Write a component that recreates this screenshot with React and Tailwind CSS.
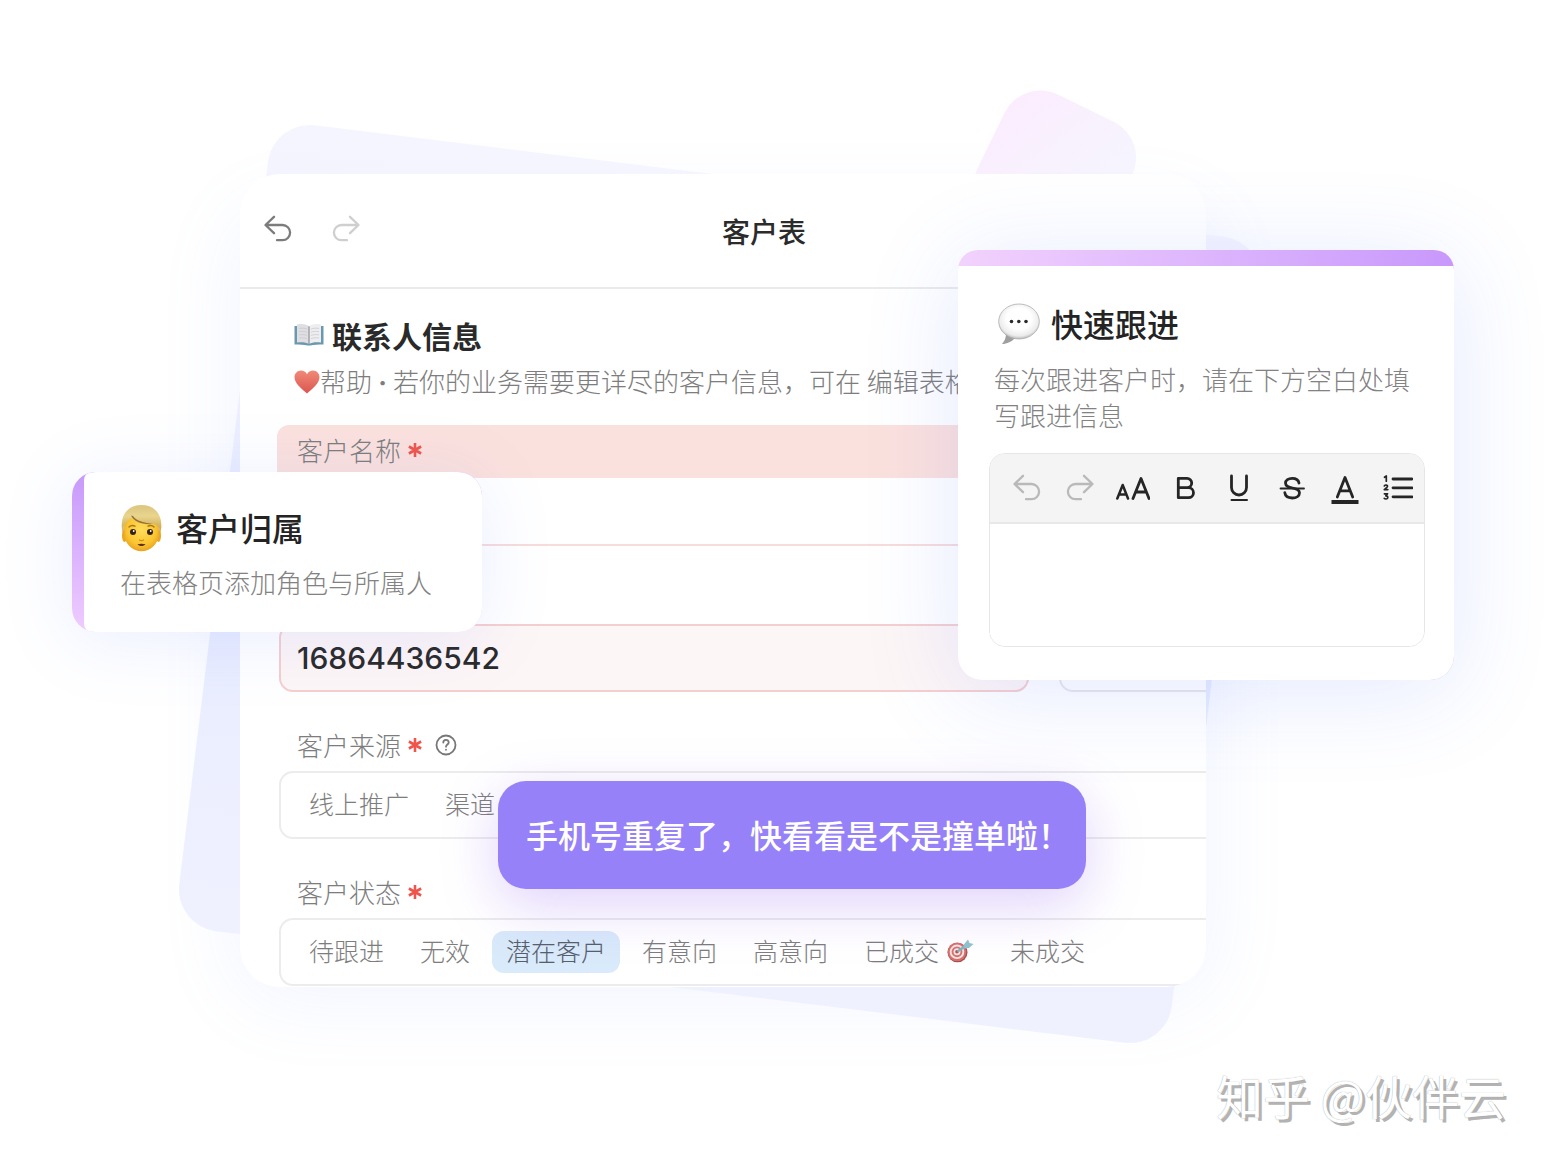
import React from "react";

function UndoIcon({ className = "" }) {
  return (
    <svg viewBox="0 0 28 28" className={"size-7 " + className} fill="none" stroke="currentColor" strokeWidth="2.300" strokeLinecap="round" strokeLinejoin="round" aria-hidden="true">
      <path d="M10 1.800 1.500 10 10 18.200M1.800 10H18.500a7.600 7.600 0 0 1 0 15.200H13" />
    </svg>
  );
}

function BookIcon() {
  return (
    <svg viewBox="0 0 30 24" className="h-6 w-[30px]" aria-hidden="true">
      <path d="M.5 3h29V21.500c-5 .2-10 0-13 1h-3c-3-1-8-.8-13-1Z" fill="#6899ae" />
      <path d="M3 1.500C7.500.6 12.500 1 15 3.500v17.500C12 19 7 18.800 3 19.500Z" fill="#dfdfe3" />
      <path d="M27 1.500C22.500.6 17.500 1 15 3.500v17.500c3-2 8-2.200 12-1.500Z" fill="#eeeeF0" />
      <path d="M15 3.500v17.500" stroke="#8f8f94" strokeWidth="1.200" />
      <path d="M5 5.500c3-.6 5.500-.4 8 .6M5 8.700c3-.6 5.500-.4 8 .6M5 11.900c3-.6 5.500-.4 8 .6M5 15.100c3-.6 5.500-.4 8 .6M25 5.500c-3-.6-5.500-.4-8 .6M25 8.700c-3-.6-5.500-.4-8 .6M25 11.900c-3-.6-5.500-.4-8 .6M25 15.100c-3-.6-5.500-.4-8 .6" fill="none" stroke="#c6c6cb" strokeWidth=".7" />
    </svg>
  );
}

function HeartIcon() {
  return (
    <svg viewBox="0 0 26 26" className="size-[26px]" aria-hidden="true">
      <defs>
        <linearGradient id="heart" x1="0" y1="0" x2="0" y2="1">
          <stop offset="0" stopColor="#f08a78" />
          <stop offset="1" stopColor="#dc5550" />
        </linearGradient>
      </defs>
      <path d="M13 24.500C8 20 .5 14.500.5 8.300.5 4.500 3.500 1.600 7 1.600c2.600 0 4.800 1.300 6 3.600 1.200-2.300 3.400-3.600 6-3.600 3.500 0 6.500 2.900 6.500 6.700C25.500 14.500 18 20 13 24.500Z" fill="url(#heart)" />
    </svg>
  );
}

function FaceIcon() {
  return (
    <svg viewBox="0 0 42 48" className="h-12 w-[42px]" aria-hidden="true">
      <defs>
        <radialGradient id="skin" cx=".5" cy=".4" r=".65">
          <stop offset="0" stopColor="#ffdc5a" />
          <stop offset=".65" stopColor="#fbc531" />
          <stop offset="1" stopColor="#e39a1c" />
        </radialGradient>
        <linearGradient id="hair" x1="0" y1="0" x2="0" y2="1">
          <stop offset="0" stopColor="#dcc680" />
          <stop offset=".4" stopColor="#ead58f" />
          <stop offset="1" stopColor="#c9a64c" />
        </linearGradient>
      </defs>
      <path d="M2 26C0 11 8 1 21.500 1S43 11 41 26l-1.500 10h-36Z" fill="url(#hair)" />
      <ellipse cx="4.500" cy="32" rx="2.500" ry="6" fill="#e9a627" />
      <ellipse cx="38.500" cy="32" rx="2.500" ry="6" fill="#e9a627" />
      <path d="M4.500 22C5 13 12 11 21.500 11S38 13 38.500 22v9c0 9-8.500 16.300-17 16.300S4.500 40 4.500 31Z" fill="url(#skin)" />
      <path d="M2.500 25c1.500-5 4-7 8.500-11 5 5 13 7 22 6 3 1 5.500 2 7.800 6 1.500-9-1.300-17-8.800-20.500C22 0 9 3 4.500 10.500 2 15 1.800 20 2.500 25Z" fill="url(#hair)" />
      <path d="M11 11.500c3 6.500 12 9.300 22 8.500-8-1-17-3-20-8Z" fill="#94702a" />
      <path d="M9 23c1.500-1.600 4-1.800 6-.8M28 22.200c2-1 4.500-.8 6 .8" fill="none" stroke="#a8761e" strokeWidth="1.400" strokeLinecap="round" />
      <circle cx="13" cy="28" r="3" fill="#33211a" />
      <circle cx="30" cy="28" r="3" fill="#33211a" />
      <circle cx="13.700" cy="27" r=".9" fill="#fff" />
      <circle cx="30.700" cy="27" r=".9" fill="#fff" />
      <path d="M19.500 36q2 1.200 4 0" fill="none" stroke="#d08a1a" strokeWidth="1.300" strokeLinecap="round" />
      <path d="M17.500 40.300c2.600-.8 5.400-.8 8 0-1.500 2.400-6.500 2.400-8 0Z" fill="#5f3217" />
    </svg>
  );
}

function BubbleIcon() {
  return (
    <svg viewBox="0 0 42 42" className="size-[42px]" aria-hidden="true">
      <defs>
        <radialGradient id="bubble" cx=".5" cy=".42" r=".6">
          <stop offset=".5" stopColor="#ffffff" />
          <stop offset=".82" stopColor="#ececec" />
          <stop offset="1" stopColor="#adadad" />
        </radialGradient>
      </defs>
      <path d="M8 31c0 4-1.500 7-4 10 5 0 10-2.500 13-6Z" fill="#9f9f9f" />
      <ellipse cx="21" cy="18.500" rx="20.300" ry="17.500" fill="url(#bubble)" stroke="#adadad" strokeWidth=".8" />
      <circle cx="13.500" cy="18.500" r="1.800" fill="#2b2b2b" />
      <circle cx="20.800" cy="18.500" r="1.800" fill="#2b2b2b" />
      <circle cx="28" cy="18.500" r="1.800" fill="#2b2b2b" />
    </svg>
  );
}

function TargetIcon() {
  return (
    <svg viewBox="0 0 27 24" className="h-6 w-[27px]" aria-hidden="true">
      <ellipse cx="10.500" cy="13.500" rx="10" ry="9.800" fill="#a85050" />
      <circle cx="10" cy="12.800" r="9.300" fill="#d9706c" />
      <circle cx="10" cy="12.800" r="7.300" fill="#f6e6e4" />
      <circle cx="10" cy="12.800" r="5.400" fill="#d9706c" />
      <circle cx="10" cy="12.800" r="3.500" fill="#f6e6e4" />
      <circle cx="10" cy="12.800" r="1.800" fill="#b9524f" />
      <path d="M10.500 12.500 20 6" stroke="#7fb3bd" strokeWidth="2.400" />
      <path d="m16.500 6 4.500-5.500 1.500 3.500 4 1-4.500 4-5 .5Z" fill="#8fc4cd" />
    </svg>
  );
}

function Required() {
  return (
    <svg viewBox="0 0 14 14" className="size-3.5" stroke="#f0554c" strokeWidth="2.600" role="img" aria-label="必填">
      <path d="M7 0v14M.9 3.500l12.200 7M13.100 3.500.9 10.500" />
    </svg>
  );
}

function FieldLabel({ id, text, help }) {
  return (
    <div className="flex h-9 items-center gap-[7px]">
      <span id={id} className="text-[26px] leading-9 font-light text-[#7d7d7d]">{text}</span>
      <Required />
      {help && (
        <button type="button" aria-label="帮助说明" className="ml-1.5 text-[#777]">
          <svg viewBox="0 0 22 22" className="size-[22px]" fill="none" stroke="currentColor" strokeWidth="1.800" strokeLinecap="round" aria-hidden="true">
            <circle cx="11" cy="11" r="9.500" />
            <path d="M8.300 8.600c0-3.600 5.400-3.600 5.400-.2 0 2-2.700 2.100-2.700 4.300M11 15.600v.2" />
          </svg>
        </button>
      )}
    </div>
  );
}

function OptionRow({ labelledBy, options, selected }) {
  return (
    <div role="group" aria-labelledby={labelledBy} className="flex h-[68px] items-center gap-2 rounded-[14px] border-2 border-[#ececec] px-3.5">
      {options.map((o) => (
        <button
          key={o.text}
          type="button"
          aria-pressed={o.text === selected}
          className={
            "flex h-[42px] shrink-0 items-center gap-2 rounded-xl px-3.5 pb-0.5 text-[25px] font-light whitespace-nowrap " +
            (o.text === selected ? "bg-[#d9eafa] text-[#55606b]" : "text-[#7d7d7d]")
          }
        >
          {o.text}
          {o.icon}
        </button>
      ))}
    </div>
  );
}

function FormCard() {
  return (
    <section className="relative h-[813px] overflow-hidden rounded-[40px] bg-white">
      <div className="w-[calc(100%+82px)]">
        <header className="grid h-[115px] grid-cols-[1fr_auto_1fr] items-center border-b-2 border-[#ebebeb] pl-6">
          <div className="flex items-center gap-10 pb-1">
            <button type="button" aria-label="撤销" className="text-[#7c7c7c]"><UndoIcon /></button>
            <button type="button" aria-label="重做" className="text-[#cfcfcf]"><UndoIcon className="-scale-x-100" /></button>
          </div>
          <h1 className="pr-6 text-[28px] leading-10 font-medium text-[#2b2b2b]">客户表</h1>
        </header>

        <div className="pl-[39px]">
          <div className="pt-[26px] pl-[15px]">
            <h2 className="flex h-10 items-center gap-2 text-[30px] leading-10 font-bold text-[#2a2a2a]">
              <BookIcon />
              联系人信息
            </h2>
            <p className="flex h-[53px] items-center text-[26px] font-light whitespace-nowrap text-[#7d7d7d]">
              <HeartIcon />
              <span>
                帮助<span className="font-[Inter,sans-serif] font-bold"> · </span>若你的业务需要更详尽的客户信息，可在 编辑表格
              </span>
            </p>
          </div>

          <div className="mt-[17px] -ml-0.5 h-[53px] rounded-tl-xl bg-[#fbe1dd] pt-[7px] pl-5">
            <FieldLabel id="name-label" text="客户名称" />
          </div>
          <div className="h-[68px] border-b-2 border-[#f8dcda]" />

          <div className="mt-[78px] flex gap-[30px]">
            <input
              aria-label="手机号"
              defaultValue="16864436542"
              className="h-[68px] w-[750px] shrink-0 rounded-[14px] border-2 border-[#f5cfcf] bg-[#fdf6f6] pl-4 font-[Inter,sans-serif] text-[30px] font-medium text-[#2a2a2a] outline-none"
            />
            <div className="h-[68px] grow rounded-[14px] border-2 border-[#e6e8ee]" />
          </div>

          <div className="mt-[35px]">
            <div className="pl-[18px]">
              <FieldLabel id="source-label" text="客户来源" help />
            </div>
            <div className="mt-2">
              <OptionRow labelledBy="source-label" options={[{ text: "线上推广" }, { text: "渠道" }]} />
            </div>
          </div>

          <div className="mt-[35px]">
            <div className="pl-[18px]">
              <FieldLabel id="status-label" text="客户状态" />
            </div>
            <div className="mt-2">
              <OptionRow
                labelledBy="status-label"
                selected="潜在客户"
                options={[
                  { text: "待跟进" },
                  { text: "无效" },
                  { text: "潜在客户" },
                  { text: "有意向" },
                  { text: "高意向" },
                  { text: "已成交", icon: <TargetIcon /> },
                  { text: "未成交" },
                ]}
              />
            </div>
          </div>
        </div>
      </div>
    </section>
  );
}

function OwnerCard() {
  return (
    <section className="absolute top-[472px] left-[72px] flex h-[160px] w-[410px] overflow-hidden rounded-3xl bg-gradient-to-b from-[#c799fb] to-[#efccff] pl-3 shadow-[0_8px_72px_rgba(90,120,255,0.13)]">
      <div className="w-full rounded-l-lg bg-white pt-8 pl-9">
        <h2 className="flex h-12 items-center gap-3.5 text-[32px] leading-10 font-medium text-[#242424]">
          <FaceIcon />
          <span className="pb-0.5">客户归属</span>
        </h2>
        <p className="mt-3 text-[26px] leading-9 font-light text-[#828282]">在表格页添加角色与所属人</p>
      </div>
    </section>
  );
}

const tools = [
  { label: "撤销", icon: <UndoIcon className="text-[#b9b9b9]" /> },
  { label: "重做", icon: <UndoIcon className="-scale-x-100 text-[#b9b9b9]" /> },
  {
    label: "字号",
    icon: (
      <svg viewBox="0 0 34 28" className="h-7 w-[34px]" fill="none" stroke="currentColor" strokeWidth="2.800" strokeLinejoin="round" strokeLinecap="round" aria-hidden="true">
        <path d="M1.300 24.500 6.700 11l5.300 13.500M3.200 20.500h7" strokeWidth="2.500" />
        <path d="M17 24.500 25 4.500l8 20M19.800 18h10.400" />
      </svg>
    ),
  },
  {
    label: "加粗",
    icon: (
      <svg viewBox="0 0 28 28" className="size-7" fill="none" stroke="currentColor" strokeWidth="2.800" strokeLinejoin="round" aria-hidden="true">
        <path d="M6.300 4.300H15a4.600 4.600 0 0 1 0 9.400H6.300ZM6.300 13.700H16.500a5 5 0 0 1 0 10H6.300Z" />
      </svg>
    ),
  },
  {
    label: "下划线",
    icon: (
      <svg viewBox="0 0 28 28" className="size-7" fill="none" stroke="currentColor" strokeLinecap="round" aria-hidden="true">
        <path d="M6.500 2v11.500a7.500 7.500 0 0 0 15 0V2" strokeWidth="2.800" />
        <path d="M6.500 26h15.500" strokeWidth="2" />
      </svg>
    ),
  },
  {
    label: "删除线",
    icon: (
      <svg viewBox="0 0 28 28" className="size-7" fill="none" stroke="currentColor" strokeLinecap="round" aria-hidden="true">
        <path d="M21 9C20.500 5.800 18 4.300 14.200 4.300S7.500 6.200 7.500 9.200c0 6.300 14 3.300 14 9.500 0 3.300-3.200 5.300-7.300 5.300S7.200 22 6.800 18.700" strokeWidth="2.800" />
        <path d="M2.500 14.500h23.500" strokeWidth="1.800" />
      </svg>
    ),
  },
  {
    label: "文字颜色",
    icon: (
      <svg viewBox="0 0 28 32" className="h-8 w-7" fill="none" stroke="currentColor" strokeLinecap="round" strokeLinejoin="round" aria-hidden="true">
        <path d="M6.300 25 14 5.500l7.700 19.500M9 18.800h10" strokeWidth="2.800" />
        <path d="M.5 30h27" strokeWidth="4" strokeLinecap="butt" />
      </svg>
    ),
  },
  {
    label: "有序列表",
    icon: (
      <svg viewBox="0 0 30 28" className="h-7 w-[30px]" fill="none" stroke="currentColor" strokeLinecap="round" strokeLinejoin="round" aria-hidden="true">
        <path d="M10 5h19M10 13.800h19M10 22.800h19" strokeWidth="2.800" />
        <path d="M1.500 3.300 3.300 2v5.200M1.300 12c.4-1.500 3.400-1.200 3.200.4-.1 1-2 1.800-3.200 3.200h3.500M1.400 19.800h3.200l-1.800 2c2.600 0 2.600 3.200.2 3.200-.8 0-1.400-.2-1.800-.7" strokeWidth="1.700" />
      </svg>
    ),
  },
];

function FollowCard() {
  return (
    <section className="absolute top-[250px] right-[92px] w-[496px] overflow-hidden rounded-t-[20px] rounded-b-3xl bg-gradient-to-r from-[#f2d2fd] to-[#c898fb] pt-4 shadow-[0_12px_96px_rgba(90,120,255,0.16)]">
      <div className="h-[414px] bg-white px-[31px] pt-[35px]">
        <h2 className="flex h-[46px] items-center gap-[11px] pl-[9px] text-[32px] leading-10 font-medium text-[#242424]">
          <BubbleIcon />
          <span className="pb-0.5">快速跟进</span>
        </h2>
        <p className="mt-3.5 pl-[5px] text-[26px] leading-9 font-light text-[#828282]">每次跟进客户时，请在下方空白处填写跟进信息</p>
        <div className="mt-5 -mr-0.5 overflow-hidden rounded-2xl border border-[#e6e6e6]">
          <div role="toolbar" aria-label="文本格式" className="grid h-[70px] grid-cols-8 items-center border-b-2 border-[#e8e8e8] bg-[#f4f4f4] pl-2.5 text-[#252525]">
            {tools.map((t) => (
              <button key={t.label} type="button" aria-label={t.label} className="flex h-10 items-center justify-center">
                {t.icon}
              </button>
            ))}
          </div>
          <textarea aria-label="跟进信息" className="block h-[122px] w-full resize-none bg-white p-4 text-[26px] outline-none" />
        </div>
      </div>
    </section>
  );
}

function Backdrop() {
  return (
    <svg viewBox="0 0 1546 1164" className="absolute top-0 left-0 w-full" aria-hidden="true">
      <defs>
        <linearGradient id="pink" x1="0" y1="0" x2="1" y2=".5">
          <stop offset="0" stopColor="#fcecfe" />
          <stop offset=".8" stopColor="#f6f4fe" />
        </linearGradient>
        <linearGradient id="sheet" x1="0" y1="0" x2="0" y2="1">
          <stop offset="0" stopColor="#f5f5ff" />
          <stop offset=".55" stopColor="#e7ecff" />
          <stop offset="1" stopColor="#f0f1ff" />
        </linearGradient>
        <filter id="glow" x="-20%" y="-20%" width="140%" height="140%">
          <feGaussianBlur stdDeviation="40" />
        </filter>
      </defs>
      <rect x="235" y="210" width="976" height="790" rx="50" fill="#7c9cff" opacity=".1" filter="url(#glow)" />
      <rect x="220" y="178" width="1000" height="812" rx="42" fill="url(#sheet)" transform="rotate(7 720 583)" />
      <rect x="1022" y="77" width="142" height="142" rx="40" fill="url(#pink)" transform="rotate(26 1022 77)" />
    </svg>
  );
}

export default function App() {
  return (
    <main className='relative min-h-screen overflow-hidden bg-white font-["Noto_Sans_CJK_SC",sans-serif]'>
      <Backdrop />
      <div className="pt-[174px] pr-[340px] pl-[240px]">
        <FormCard />
      </div>
      <FollowCard />
      <OwnerCard />
      <div role="alert" className="absolute top-[781px] left-[498px] flex h-[108px] w-[588px] items-center rounded-[28px] bg-[#9681f8] pb-0.5 pl-7 text-[32px] font-medium whitespace-nowrap text-white shadow-[0_16px_56px_rgba(140,90,240,0.27)]">
        手机号重复了，快看看是不是撞单啦！
      </div>
      <footer className="relative mt-[72px] pr-10 pb-[33px] text-right text-[47px] leading-[72px] text-white [text-shadow:0_0_1px_#999,3px_3px_0_#b3b3b3]">
        知乎 @伙伴云
      </footer>
    </main>
  );
}
